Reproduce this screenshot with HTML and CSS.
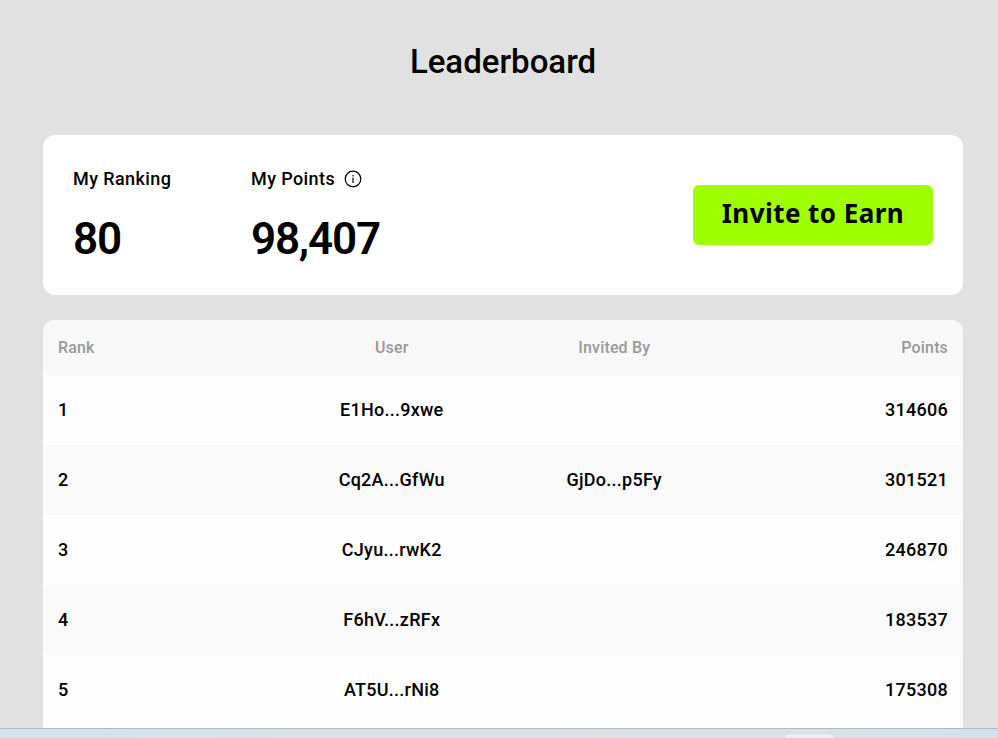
FILE: index.html
```html
<!DOCTYPE html>
<html lang="en">
<head>
<meta charset="utf-8">
<title>Leaderboard</title>
<link rel="stylesheet" href="styles.css">
</head>
<body>
<div class="screen">
  <main class="page">
    <h1 class="title">Leaderboard</h1>
    <section class="summary">
      <div class="stat stat-rank">
        <div class="stat-label">My Ranking</div>
        <div class="stat-value">80</div>
      </div>
      <div class="stat">
        <div class="stat-label">My Points
          <svg class="info" viewBox="0 0 18 18" width="18" height="18" aria-hidden="true">
            <circle cx="9" cy="9" r="7.8" fill="none" stroke="#000" stroke-width="1.2"/>
            <rect x="8.4" y="7.6" width="1.2" height="5.4" fill="#000"/>
            <rect x="8.4" y="5" width="1.2" height="1.4" fill="#000"/>
          </svg>
        </div>
        <div class="stat-value">98,407</div>
      </div>
      <button class="invite">Invite to Earn</button>
    </section>
    <section class="board">
      <div class="row head"><span>Rank</span><span class="c">User</span><span class="c">Invited By</span><span class="r">Points</span></div>
      <div class="row odd"><span>1</span><span class="c">E1Ho...9xwe</span><span class="c"></span><span class="r">314606</span></div>
      <div class="row even"><span>2</span><span class="c">Cq2A...GfWu</span><span class="c">GjDo...p5Fy</span><span class="r">301521</span></div>
      <div class="row odd"><span>3</span><span class="c">CJyu...rwK2</span><span class="c"></span><span class="r">246870</span></div>
      <div class="row even"><span>4</span><span class="c">F6hV...zRFx</span><span class="c"></span><span class="r">183537</span></div>
      <div class="row odd"><span>5</span><span class="c">AT5U...rNi8</span><span class="c"></span><span class="r">175308</span></div>
    </section>
  </main>
  <div class="taskbar"><div class="taskbar-tab"></div></div>
</div>
</body>
</html>
```

FILE: styles.css
```css
* { box-sizing: border-box; }
html, body { margin: 0; height: 100%; overflow: hidden; }
body { background: #e1e1e1; font-family: Roboto, "Liberation Sans", sans-serif; color: #000; }
.screen { height: 738px; display: flex; flex-direction: column; }
.page { flex: 1; min-height: 0; overflow: hidden; padding: 0 35px 0 43px; }
.title { margin: 0; padding-top: 41px; height: 135px; text-align: center; font-size: 33px; line-height: 42px; font-weight: 500; }
.summary { height: 160px; background: #fff; border-radius: 12px; display: flex; align-items: center; padding: 0 30px; }
.stat { display: flex; flex-direction: column; gap: 26px; padding-bottom: 2px; }
.stat-rank { width: 178px; }
.stat-label { font-size: 18px; line-height: 24px; font-weight: 500; letter-spacing: 0.4px; display: flex; align-items: center; gap: 9px; }
.info { flex: none; }
.stat-value { font-size: 44px; line-height: 44px; font-weight: 600; letter-spacing: -1.2px; }
.invite { margin-left: auto; width: 240px; height: 60px; border: 0; border-radius: 6px; padding: 0 0 5px; background: #a0ff00; color: #000; font-family: "Noto Sans", sans-serif; font-size: 26px; font-weight: 700; letter-spacing: 0.45px; }
.board { margin-top: 25px; border-radius: 12px 12px 0 0; overflow: hidden; background: #fdfdfd; padding-bottom: 40px; }
.row { display: grid; grid-template-columns: repeat(4, 1fr); align-items: center; padding: 0 15px 2px; height: 70px; font-size: 18px; font-weight: 500; letter-spacing: 0.25px; }
.head { height: 55px; padding-bottom: 0; background: #f8f8f8; color: #999; font-size: 16px; letter-spacing: 0.15px; }
.even { background: #f9f9f9; }
.odd { background: #fdfdfd; }
.c { text-align: center; }
.r { text-align: right; }
.taskbar { height: 10px; flex: none; border-top: 1px solid #b4b8bb; background: linear-gradient(90deg, #cfe2ee, #dde0e3 60%, #d0e1ec); position: relative; overflow: hidden; }
.taskbar-tab { position: absolute; left: 785px; top: 5px; width: 48px; height: 10px; background: #e8eef2; border-radius: 4px 4px 0 0; }
```
